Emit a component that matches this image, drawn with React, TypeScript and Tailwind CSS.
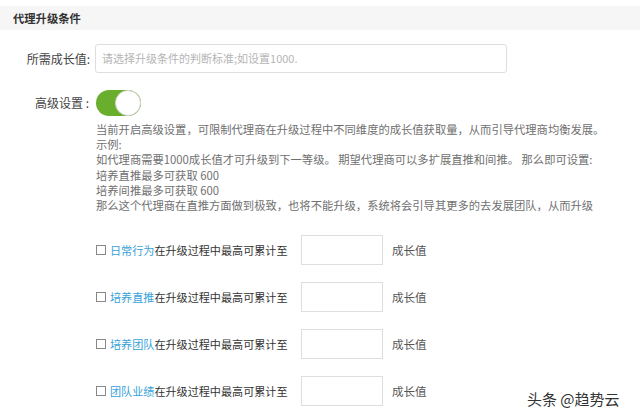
import React from "react";

const rows = ["日常行为", "培养直推", "培养团队", "团队业绩"];

const desc = [
  "当前开启高级设置，可限制代理商在升级过程中不同维度的成长值获取量，从而引导代理商均衡发展。",
  "示例:",
  "如代理商需要1000成长值才可升级到下一等级。 期望代理商可以多扩展直推和间推。 那么即可设置:",
  "培养直推最多可获取 600",
  "培养间推最多可获取 600",
  "那么这个代理商在直推方面做到极致，也将不能升级，系统将会引导其更多的去发展团队，从而升级",
];

export default function App() {
  return (
    <div className="relative w-[640px] h-[418px] overflow-hidden bg-white font-['Noto_Sans_CJK_SC','Microsoft_YaHei',sans-serif]">
      <div className="mt-[6px] h-[24px] bg-[#f6f6f6] pl-[13px] flex items-center text-[11.3px] font-bold text-[#333]">
        代理升级条件
      </div>

      <div className="mt-[14px] flex items-center">
        <div className="w-[90px] text-right text-[12px] text-[#444]">所需成长值:</div>
        <div className="ml-[5px] w-[412px] h-[29px] border border-[#dedede] rounded-[3px] flex items-center pl-[6px] text-[11px] text-[#b5b5b5]">
          请选择升级条件的判断标准;如设置1000.
        </div>
      </div>

      <div className="mt-[17px] flex items-center">
        <div className="w-[89px] text-right text-[12px] text-[#444]">高级设置 :</div>
        <div className="ml-[7px] relative w-[45px] h-[26px] rounded-full bg-[#6aae2d]">
          <div className="absolute right-0 top-0 w-[26px] h-[26px] rounded-full bg-white border border-[#d4d4d4]" />
        </div>
      </div>

      <div className="mt-[6px] pl-[96px] text-[11.3px] leading-[15.2px] text-[#707070]">
        {desc.map((d, i) => (
          <div key={i}>{d}</div>
        ))}
      </div>

      <div className="mt-[22px] pl-[96px] flex flex-col gap-[17px]">
        {rows.map((r) => (
          <div key={r} className="flex items-center">
            <div className="w-[10px] h-[10px] border border-[#888] bg-white" />
            <div className="ml-[4px] w-[191px] text-[11.1px] text-[#333]">
              <span className="text-[#37a2d9]">{r}</span>在升级过程中最高可累计至
            </div>
            <div className="w-[82px] h-[30px] border border-[#dedede] bg-white" />
            <div className="ml-[9px] text-[11.5px] text-[#555]">成长值</div>
          </div>
        ))}
      </div>

      <div className="absolute left-[527px] top-[388px] text-[15px] text-[#333] [text-shadow:0_0_2px_#fff,0_0_2px_#fff]">
        头条 @趋势云
      </div>
    </div>
  );
}
